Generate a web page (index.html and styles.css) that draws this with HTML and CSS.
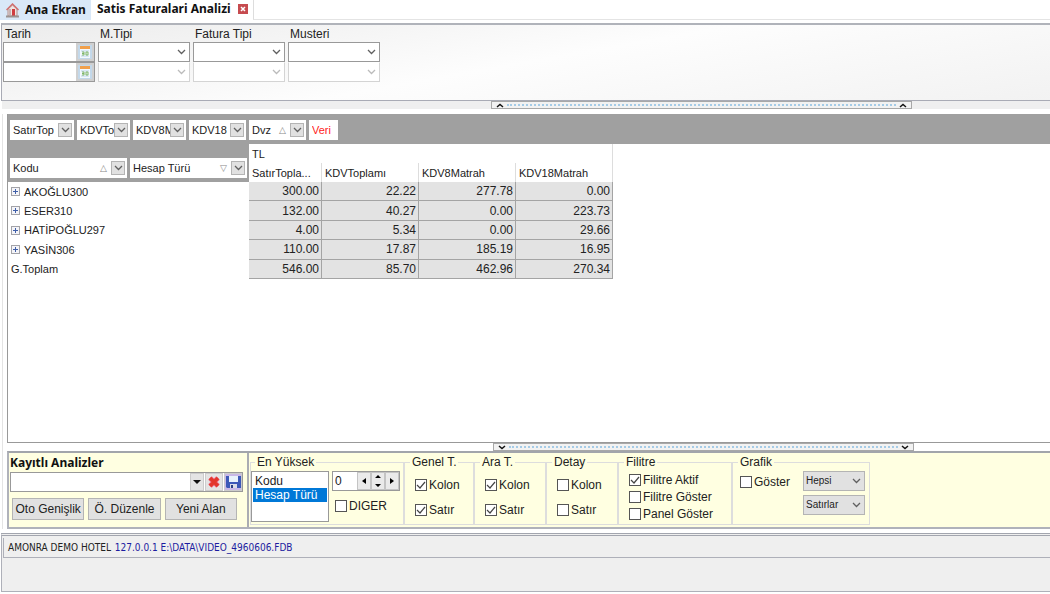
FILE: index.html
```
<!DOCTYPE html>
<html lang="tr">
<head>
    <meta charset="UTF-8">
    <meta name="viewport" content="width=device-width, initial-scale=1.0">
    <title>Satis Faturalari Analizi</title>
    <link rel="stylesheet" href="styles.css">
</head>
<body>
    <svg class="defs" width="0" height="0" aria-hidden="true">
        <symbol id="takvim" viewBox="0 0 14 14">
            <rect x="0" y="0" width="14" height="14" fill="#c3d8ea"/>
            <rect x="2" y="1" width="10" height="12" fill="#f4f9fd"/>
            <rect x="2" y="1" width="10" height="3" fill="#f0a04c"/>
            <path d="M3 6h8M3 11h8" stroke="#bdd4ea"/>
            <path d="M4 7h2v3H4M4 8.500h2M8 7h2v3H8z" fill="none" stroke="#7fb569"/>
        </symbol>
        <symbol id="ok" viewBox="0 0 9 6">
            <path d="M1 1l3.500 3.500L8 1" fill="none" stroke="#606060" stroke-width="1.300"/>
        </symbol>
        <symbol id="arti" viewBox="0 0 9 9">
            <rect x=".5" y=".5" width="8" height="8" fill="#f4f4f8" stroke="#a3a3a8"/>
            <path d="M2 4.500h5M4.500 2v5" stroke="#3f5fa8"/>
        </symbol>
    </svg>

    <nav class="tabs">
        <a class="tab" href="#">
            <svg width="13" height="15" viewBox="0 0 13 15">
                <path d="M2 6v7h9V6L6.500 2z" fill="#efe4e2" stroke="#b08e8c"/>
                <path d="M.5 7L6.500 1l6 6" fill="none" stroke="#d07070" stroke-width="1.500"/>
                <rect x="6" y="6" width="3" height="7" fill="#cf3d41"/>
                <path d="M4 6v6" stroke="#b8a4a6" stroke-width="1.500"/>
                <path d="M0 13.500h13" stroke="#9b9291" stroke-width="2"/>
            </svg>
            Ana Ekran
        </a>
        <div class="tab active">
            Satis Faturalari Analizi
            <button class="close" aria-label="Kapat">
                <svg width="10" height="10" viewBox="0 0 10 10"><path d="M3 3l4 4M7 3L3 7" stroke="#fff" stroke-width="1.500"/></svg>
            </button>
        </div>
        <div class="tab-rest"></div>
    </nav>

    <form class="filters">
        <div class="filter">
            <label for="tarih1">Tarih</label>
            <div class="date"><input type="text" id="tarih1"><button type="button" aria-label="Takvim"><svg width="14" height="14"><use href="#takvim"/></svg></button></div>
            <div class="date"><input type="text" aria-label="Tarih bitiş"><button type="button" aria-label="Takvim"><svg width="14" height="14"><use href="#takvim"/></svg></button></div>
        </div>
        <div class="filter">
            <label for="mtipi">M.Tipi</label>
            <select id="mtipi"></select>
            <select aria-label="M.Tipi 2" disabled></select>
        </div>
        <div class="filter">
            <label for="ftipi">Fatura Tipi</label>
            <select id="ftipi"></select>
            <select aria-label="Fatura Tipi 2" disabled></select>
        </div>
        <div class="filter">
            <label for="musteri">Musteri</label>
            <select id="musteri"></select>
            <select aria-label="Musteri 2" disabled></select>
        </div>
    </form>

    <div class="splitter top">
        <button class="handle" aria-label="Filtreleri gizle">
            <svg width="8" height="5" viewBox="0 0 8 5"><path d="M1 4l3-2.500L7 4" fill="none" stroke="#111" stroke-width="1.500"/></svg>
            <span class="dots"></span>
            <svg width="8" height="5" viewBox="0 0 8 5"><path d="M1 4l3-2.500L7 4" fill="none" stroke="#111" stroke-width="1.500"/></svg>
        </button>
    </div>

    <main>
        <section class="pivot">
            <div class="field-bar">
                <div class="field w1"><span>SatırTop</span><button aria-label="Filtre"><svg width="9" height="6"><use href="#ok"/></svg></button></div>
                <div class="field w2"><span>KDVTo</span><button aria-label="Filtre"><svg width="9" height="6"><use href="#ok"/></svg></button></div>
                <div class="field w2"><span>KDV8M</span><button aria-label="Filtre"><svg width="9" height="6"><use href="#ok"/></svg></button></div>
                <div class="field w3"><span>KDV18</span><button aria-label="Filtre"><svg width="9" height="6"><use href="#ok"/></svg></button></div>
                <div class="field w3"><span>Dvz</span><i>△</i><button aria-label="Filtre"><svg width="9" height="6"><use href="#ok"/></svg></button></div>
                <div class="field veri"><span>Veri</span></div>
            </div>
            <table>
                <colgroup><col class="c-name"><col class="c-first"><col class="c-num"><col class="c-num"><col class="c-num"></colgroup>
                <thead>
                    <tr>
                        <th rowspan="2" class="corner">
                            <div class="row-fields">
                                <div class="field"><span>Kodu</span><i>△</i><button aria-label="Filtre"><svg width="9" height="6"><use href="#ok"/></svg></button></div>
                                <div class="field"><span>Hesap Türü</span><i>▽</i><button aria-label="Filtre"><svg width="9" height="6"><use href="#ok"/></svg></button></div>
                            </div>
                        </th>
                        <th colspan="4" class="group">TL</th>
                    </tr>
                    <tr>
                        <th>SatırTopla...</th>
                        <th>KDVToplamı</th>
                        <th>KDV8Matrah</th>
                        <th>KDV18Matrah</th>
                    </tr>
                </thead>
                <tbody>
                    <tr><th><svg width="9" height="9"><use href="#arti"/></svg>AKOĞLU300</th><td>300.00</td><td>22.22</td><td>277.78</td><td>0.00</td></tr>
                    <tr><th><svg width="9" height="9"><use href="#arti"/></svg>ESER310</th><td>132.00</td><td>40.27</td><td>0.00</td><td>223.73</td></tr>
                    <tr><th><svg width="9" height="9"><use href="#arti"/></svg>HATİPOĞLU297</th><td>4.00</td><td>5.34</td><td>0.00</td><td>29.66</td></tr>
                    <tr><th><svg width="9" height="9"><use href="#arti"/></svg>YASİN306</th><td>110.00</td><td>17.87</td><td>185.19</td><td>16.95</td></tr>
                    <tr><th>G.Toplam</th><td>546.00</td><td>85.70</td><td>462.96</td><td>270.34</td></tr>
                </tbody>
            </table>
        </section>

        <div class="splitter">
            <button class="handle" aria-label="Ayarları gizle">
                <svg width="8" height="5" viewBox="0 0 8 5"><path d="M1 1l3 2.500L7 1" fill="none" stroke="#111" stroke-width="1.500"/></svg>
                <span class="dots"></span>
                <svg width="8" height="5" viewBox="0 0 8 5"><path d="M1 1l3 2.500L7 1" fill="none" stroke="#111" stroke-width="1.500"/></svg>
            </button>
        </div>

        <form class="settings">
            <div class="saved">
                <label for="analiz">Kayıtlı Analizler</label>
                <div class="combo">
                    <input type="text" id="analiz">
                    <button type="button" aria-label="Aç"><svg width="8" height="5" viewBox="0 0 8 5"><path d="M0 0h8L4 4z" fill="#111"/></svg></button>
                    <button type="button" aria-label="Sil"><svg width="14" height="14" viewBox="0 0 14 14"><path d="M3 3l8 8M11 3l-8 8" stroke="#ef6c86" stroke-width="5"/><path d="M3 3l8 8M11 3l-8 8" stroke="#e3362c" stroke-width="3.500"/></svg></button>
                    <button type="button" class="save" aria-label="Kaydet"><svg width="15" height="14" viewBox="0 0 15 14"><path d="M0 1h15v12H1L0 12z" fill="#3c58b8"/><path d="M3 1h9v6H3z" fill="#e8f2fc"/><path d="M4 9h7v4H4z" fill="#d9dce6"/><path d="M5 10h2v3H5z" fill="#2c3f86"/></svg></button>
                </div>
                <div class="buttons">
                    <button type="button">Oto Genişlik</button>
                    <button type="button">Ö. Düzenle</button>
                    <button type="button">Yeni Alan</button>
                </div>
            </div>
            <div class="groups">
                <fieldset class="g-top">
                    <legend>En Yüksek</legend>
                    <select class="list" size="3" aria-label="En Yüksek">
                        <option>Kodu</option>
                        <option selected>Hesap Türü</option>
                    </select>
                    <div class="top-right">
                        <div class="spin">
                            <input type="text" value="0" aria-label="Adet">
                            <button type="button" aria-label="Önceki"><svg width="4" height="6" viewBox="0 0 4 6"><path d="M4 0v6L0 3z"/></svg></button>
                            <button type="button" aria-label="Değiştir"><svg width="6" height="12" viewBox="0 0 6 12"><path d="M0 3h6L3 0zM0 9h6l-3 3z"/></svg></button>
                            <button type="button" aria-label="Sonraki"><svg width="4" height="6" viewBox="0 0 4 6"><path d="M0 0v6l4-3z"/></svg></button>
                        </div>
                        <label class="check"><input type="checkbox">DIGER</label>
                    </div>
                </fieldset>
                <fieldset class="g-genel">
                    <legend>Genel T.</legend>
                    <label class="check"><input type="checkbox" checked>Kolon</label>
                    <label class="check"><input type="checkbox" checked>Satır</label>
                </fieldset>
                <fieldset class="g-ara">
                    <legend>Ara T.</legend>
                    <label class="check"><input type="checkbox" checked>Kolon</label>
                    <label class="check"><input type="checkbox" checked>Satır</label>
                </fieldset>
                <fieldset class="g-ara">
                    <legend>Detay</legend>
                    <label class="check"><input type="checkbox">Kolon</label>
                    <label class="check"><input type="checkbox">Satır</label>
                </fieldset>
                <fieldset class="g-filitre">
                    <legend>Filitre</legend>
                    <label class="check"><input type="checkbox" checked>Filitre Aktif</label>
                    <label class="check"><input type="checkbox">Filitre Göster</label>
                    <label class="check"><input type="checkbox">Panel Göster</label>
                </fieldset>
                <fieldset class="g-grafik">
                    <legend>Grafik</legend>
                    <label class="check"><input type="checkbox">Göster</label>
                    <div class="selects">
                        <select aria-label="Grafik verisi"><option>Hepsi</option></select>
                        <select aria-label="Grafik yönü"><option>Satırlar</option></select>
                    </div>
                </fieldset>
            </div>
        </form>
    </main>

    <footer>
        <div class="status">AMONRA DEMO HOTEL <span>127.0.0.1 E:\DATA\VIDEO_4960606.FDB</span></div>
    </footer>
</body>
</html>
```
FILE: styles.css
```
* {
    box-sizing: border-box;
}
body {
    margin: 0;
    min-height: 100vh;
    display: flex;
    flex-direction: column;
    padding-bottom: 2px;
    background: #fff;
    color: #222;
    font-family: "Liberation Sans", Arial, sans-serif;
    font-size: 12px;
    line-height: 14px;
}
.defs {
    position: absolute;
}
svg {
    display: block;
    flex: none;
}
button, input, select {
    font: inherit;
    color: inherit;
    margin: 0;
    padding: 0;
    border-radius: 0;
}
button {
    display: flex;
    align-items: center;
    justify-content: center;
}

/* tabs */
.tabs {
    display: flex;
    height: 20px;
    margin-bottom: 3px;
    font-family: "Noto Sans", sans-serif;
    font-size: 12px;
    font-weight: bold;
}
.tab {
    display: flex;
    align-items: center;
    gap: 6px;
    width: 91px;
    padding-left: 6px;
    background: #d9e8f8;
    color: #111;
    text-decoration: none;
    white-space: nowrap;
}
.tab.active {
    width: 162px;
    padding: 0 5px 3px 6px;
    justify-content: space-between;
    background: #fff;
}
.close {
    width: 10px;
    height: 10px;
    border: none;
    background: #c64b4f;
}
.tab-rest {
    flex: 1;
    border-left: 1px solid #ddd;
    border-bottom: 1px solid #e4e4e4;
}

/* filters */
.filters {
    display: flex;
    gap: 3px;
    height: 78px;
    margin-left: 1px;
    padding: 2px 1px 0;
    border: 1px solid #a9abb5;
    border-top: 2px solid #b0b3ba;
    border-right: none;
    background: linear-gradient(170deg, #ececec, #fdfdfd 50%, #f2f2f2);
}
.filter {
    width: 92px;
}
.filter label {
    display: block;
    height: 15px;
    padding-left: 2px;
}
.filter select, .date {
    display: flex;
    width: 100%;
    height: 20px;
    border: 1px solid #999;
    background-color: #fff;
}
.date input {
    flex: 1;
    min-width: 0;
    border: none;
}
.date button {
    width: 18px;
    border: none;
    background: #d0d0d0;
}
select {
    appearance: none;
    background: #fff url("data:image/svg+xml,%3Csvg xmlns='http://www.w3.org/2000/svg' width='9' height='6'%3E%3Cpath d='M1 1l3.500 3.500L8 1' fill='none' stroke='%23606060' stroke-width='1.300'/%3E%3C/svg%3E") no-repeat right 3px center;
}
.filter select:disabled {
    border-color: #d4d4d4;
    border-top-color: #fff;
    opacity: 1;
    background-image: url("data:image/svg+xml,%3Csvg xmlns='http://www.w3.org/2000/svg' width='9' height='6'%3E%3Cpath d='M1 1l3.500 3.500L8 1' fill='none' stroke='%23bbbbbb' stroke-width='1.300'/%3E%3C/svg%3E");
}

/* splitters */
.splitter {
    display: flex;
    height: 8px;
    padding-left: 46.6%;
}
.splitter.top {
    margin: 0 0 5px 2px;
    background: #efefef;
}
.handle {
    width: 421px;
    height: 8px;
    padding: 0 4px;
    gap: 3px;
    border: 1px solid #a8a8a8;
    background: #f2f2f2;
}
.dots {
    flex: 1;
    border-top: 2px dotted #a5cbe6;
}

/* pivot */
main {
    flex: 1;
    display: flex;
    flex-direction: column;
    margin-left: 2px;
    padding-left: 4px;
    border-left: 1px solid #e4e4e4;
}
.pivot {
    flex: 1;
    border-left: 1px solid #999;
    border-bottom: 1px solid #999;
}
.field-bar {
    display: flex;
    gap: 3px;
    height: 30px;
    padding: 6px 0 0 2px;
    background: #a0a0a0;
}
.field {
    display: flex;
    align-items: center;
    height: 20px;
    padding: 0 2px 0 3px;
    background: #fff;
    font-size: 11px;
}
.field span {
    flex: 1;
    overflow: hidden;
    white-space: nowrap;
}
.field i {
    margin-right: 4px;
    color: #888;
    font-family: "DejaVu Sans", sans-serif;
    font-size: 9px;
    font-style: normal;
}
.field button {
    flex: none;
    width: 14px;
    height: 14px;
    border: 1px solid #b4b4b4;
    background: #e1e1e1;
}
.w1 { width: 64px; }
.w2 { width: 53px; }
.w3 { width: 57px; }
.veri {
    width: 29px;
    color: #f22;
}
table {
    height: 135px;
    table-layout: fixed;
    width: 605px;
    border-collapse: separate;
    border-spacing: 0;
}
.c-name { width: 241px; }
.c-first { width: 73px; }
.c-num { width: 97px; }
th, td {
    padding: 0;
    font-weight: normal;
    text-align: left;
    white-space: nowrap;
}
thead th {
    height: 19px;
    padding-left: 3px;
    border-right: 1px solid #ddd;
    font-size: 11px;
}
thead .corner {
    height: 38px;
    padding: 0 2px 4px 2px;
    border: none;
    background: #a0a0a0;
    vertical-align: bottom;
}
.row-fields {
    display: flex;
    gap: 3px;
}
.row-fields .field {
    flex: 1;
}
tbody th {
    padding-left: 3px;
    font-size: 11px;
}
tbody th svg {
    display: inline-block;
    margin: 0 4px 3px 0;
    vertical-align: middle;
}
td {
    padding-right: 2px;
    border-right: 1px solid #a4a4a4;
    border-bottom: 1px solid #a4a4a4;
    background: #e3e3e3;
    text-align: right;
}

/* settings */
.settings {
    display: flex;
    height: 78px;
    border: 2px solid #b0b2ba;
    border-top-color: #a2a5ab;
    border-right: none;
    background: #ffffe1;
}
.saved {
    width: 240px;
    padding: 3px 4px 0 1px;
    border-right: 2px solid #aaacb2;
}
.saved > label {
    display: block;
    height: 16px;
    color: #111;
    font-family: "Noto Sans", sans-serif;
    font-size: 12px;
    font-weight: bold;
}
.combo, .spin {
    display: flex;
    height: 20px;
    border: 1px solid #999;
    background: #fff;
}
.combo input {
    flex: 1;
    min-width: 0;
    border: none;
}
.combo button {
    width: 18px;
    margin-left: 1px;
    border: 1px solid #ccc;
    background: #e4e4e4;
}
.combo button:nth-of-type(1) {
    width: 14px;
}
.combo .save {
    background: #c9b8e6;
}
.buttons {
    display: flex;
    gap: 4px;
    padding: 6px 6px 0 2px;
}
.buttons button {
    flex: 1;
    height: 22px;
    border: 1px solid #b4b4b4;
    background: #e1e1e1;
    white-space: nowrap;
}
.groups {
    display: flex;
    padding: 2px 0 2px 1px;
}
fieldset {
    min-width: 0;
    margin: 0;
    padding: 4px 0 0 10px;
    border: 1px solid #ddd;
    display: flex;
    flex-direction: column;
    gap: 11px;
}
legend {
    margin-left: -5px;
    padding: 0 2px;
    height: 14px;
    font-size: 12px;
}
fieldset.g-top {
    width: 154px;
    flex-direction: row;
    gap: 3px;
    padding: 2px 0 0;
}
.g-top legend {
    margin-left: 4px;
}
.g-genel { width: 70px; padding-top: 9px; }
.g-ara { width: 72px; padding-top: 9px; }
.g-filitre { width: 114px; }
fieldset.g-filitre {
    gap: 3px;
}
fieldset.g-grafik {
    width: 138px;
    flex-direction: row;
    justify-content: space-between;
    align-items: flex-start;
    padding: 2px 4px 0 7px;
}
.g-grafik .check {
    margin-top: 4px;
}
.g-grafik legend {
    margin-left: -2px;
}
.list {
    width: 78px;
    height: 51px;
    border: 1px solid #999;
    background: #fff;
    overflow: hidden;
}
.list option {
    height: 14px;
    min-height: 14px;
    padding: 0 2px;
    margin: 0 1px;
}
.list option:checked {
    background: linear-gradient(#0078d7, #0078d7);
    color: #fff;
}
.list option:first-child {
    margin-top: 2px;
}
.spin {
    width: 68px;
    margin-bottom: 8px;
}
.spin input {
    flex: 1;
    min-width: 0;
    padding-left: 2px;
    border: none;
}
.spin button {
    width: 14px;
    border: 1px solid #c4c4c4;
    background: #eaeaea;
}
.check {
    display: flex;
    align-items: center;
    gap: 2px;
    height: 14px;
    white-space: nowrap;
}
.top-right .check {
    padding-left: 3px;
}
.check input {
    appearance: none;
    flex: none;
    width: 12px;
    height: 12px;
    border: 1px solid #555;
    background: #fff;
}
.check input:checked {
    background: #fff url("data:image/svg+xml,%3Csvg xmlns='http://www.w3.org/2000/svg' width='10' height='10'%3E%3Cpath d='M1 5l3 3 5-6' fill='none' stroke='%23444' stroke-width='1.200'/%3E%3C/svg%3E") no-repeat center;
}
.selects {
    display: flex;
    flex-direction: column;
    gap: 4px;
}
.selects select {
    width: 62px;
    height: 20px;
    padding-left: 2px;
    border: 1px solid #b4b4b4;
    background-color: #e1e1e1;
    font-size: 10px;
}

/* status */
footer {
    height: 59px;
    margin: 4px 0 0 1px;
    padding: 2px 0 0 1px;
    border: 1px solid #aeb0b9;
    border-top: 3px double #a2a5ae;
    border-right: none;
    background: #efefef;
}
.status {
    height: 20px;
    padding-left: 4px;
    border-bottom: 1px solid #aeb0b9;
    border-left: 1px solid #aeb0b9;
    font-family: "DejaVu Sans Condensed", "DejaVu Sans", sans-serif;
    font-stretch: condensed;
    font-size: 10px;
    line-height: 19px;
}
.status span {
    margin-left: 1px;
    color: #1c1ca0;
}
```
